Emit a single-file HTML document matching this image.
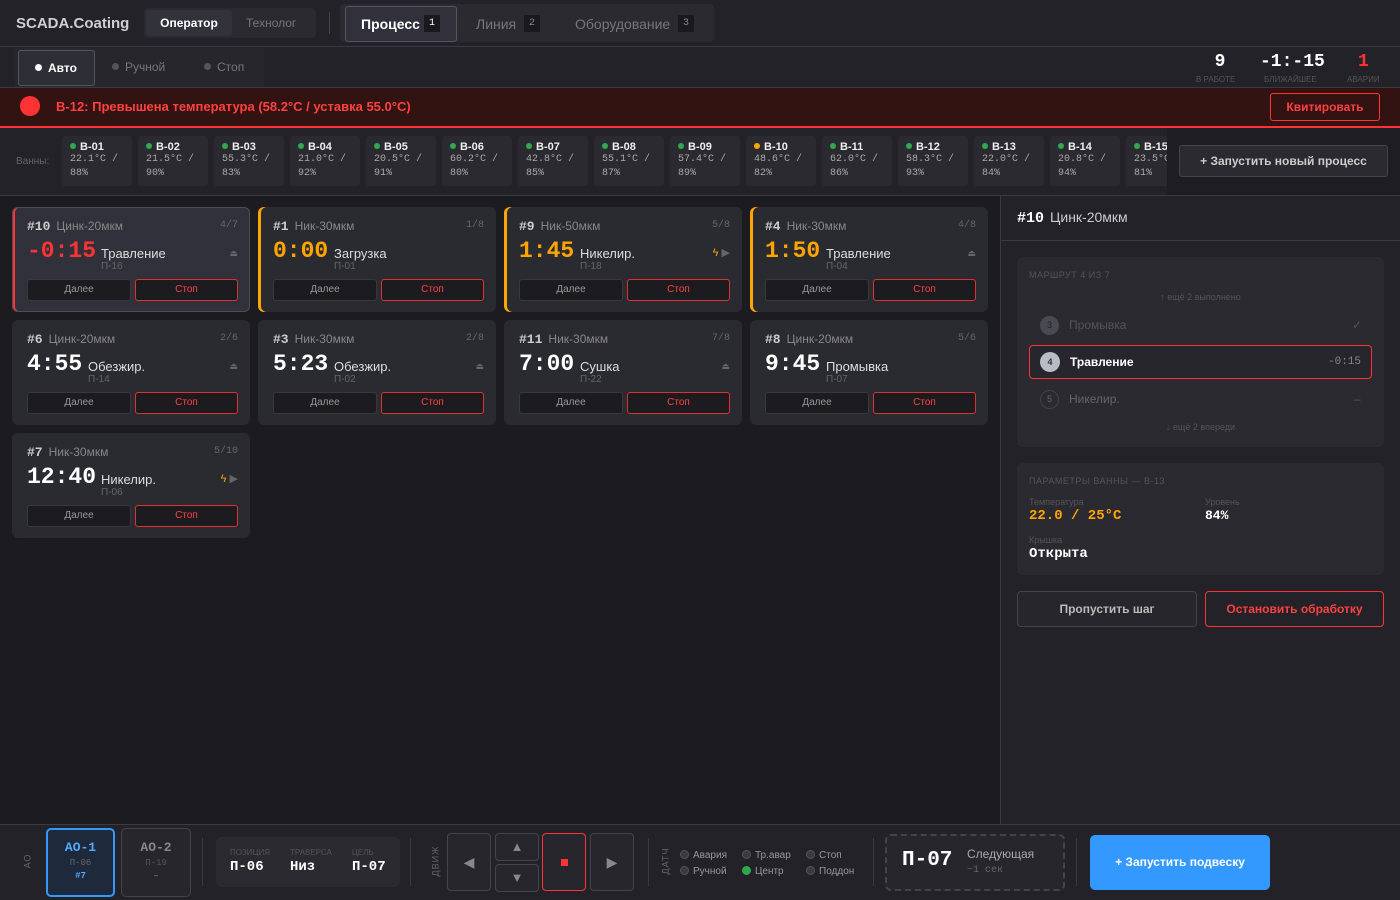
<!DOCTYPE html>
<html><head><meta charset="utf-8"><style>
*{box-sizing:border-box;margin:0;padding:0}
body{width:1400px;height:900px;background:#1c1c20;font-family:"Liberation Sans",sans-serif;color:#ddd;position:relative;overflow:hidden}
.a{position:absolute}
.m{font-family:"Liberation Mono",monospace}
.top{left:0;top:0;width:1400px;height:47px;background:#222228;border-bottom:1px solid #3a3a40}
.row2{left:0;top:47px;width:1400px;height:41px;background:#222228;border-bottom:1px solid #3a3a40}
.alarm{left:0;top:88px;width:1400px;height:40px;background:#331212;border-bottom:2px solid #ff3333}
.baths{left:0;top:128px;width:1400px;height:68px;background:#222228;border-bottom:1px solid #3a3a40}
.bath{top:136px;width:70px;height:50px;background:#2a2a30;border-radius:3px;padding:5px 0 0 8px}
.bath b{font-size:11px;color:#eee;display:block;line-height:12px}
.bath b i{display:inline-block;width:6px;height:6px;border-radius:3px;background:#2fa84f;margin-right:4px;vertical-align:1px}
.bath span{font-family:"Liberation Mono",monospace;font-size:10px;color:#aaa;line-height:14px;display:block;white-space:nowrap}
.card{width:238px;height:105px;background:#2a2a31;border-radius:6px}
.card .h{left:15px;top:12px;font-size:12px;color:#888;white-space:nowrap}
.card .h b{font-family:"Liberation Mono",monospace;color:#ccc;font-size:13px;margin-right:6px}
.card .c{right:12px;top:13px;font-size:10px;color:#666;font-family:"Liberation Mono",monospace}
.card .t{left:15px;top:31px;font-family:"Liberation Mono",monospace;font-weight:bold;font-size:23px;color:#fff}
.card .s{top:39px;font-size:13px;color:#ddd}
.card .p{top:54px;font-size:10px;color:#666}
.card .ic{right:12px;top:41px;font-size:9px;color:#666}
.card .d{left:15px;top:72px;width:104px;height:22px;background:#1c1c20;border:1px solid #38383f;border-radius:3px;font-size:10px;color:#999;text-align:center;line-height:20px}
.card .x{left:123px;top:72px;width:103px;height:22px;background:#1c1c20;border:1px solid #e03030;border-radius:3px;font-size:10px;color:#ff4040;text-align:center;line-height:20px}
.lr{box-shadow:inset 3px 0 0 #ff3333}.lo{box-shadow:inset 3px 0 0 #ffa500}
.vl{font-size:9px;color:#666;transform:rotate(-90deg);transform-origin:center;letter-spacing:1px}
.dot{display:inline-block;width:9px;height:9px;border-radius:5px;background:#3a3a42;border:1px solid #555;margin-right:4px;vertical-align:-1px}
.sn{font-size:10px;color:#999;white-space:nowrap}
.bb{border:1px solid #44444b;border-radius:4px;background:#26262c}
</style></head><body>
<div class="a top"></div>
<div class="a" style="left:16px;top:15px;font-size:15px;font-weight:bold;color:#cfcfd4">SCADA.Coating</div>
<div class="a" style="left:144px;top:8px;width:172px;height:30px;background:#2a2a30;border-radius:4px"></div>
<div class="a" style="left:146px;top:10px;width:86px;height:26px;background:#32323a;border-radius:3px;font-size:12px;font-weight:bold;color:#fff;text-align:center;line-height:26px">Оператор</div>
<div class="a" style="left:246px;top:16px;font-size:12px;color:#777">Технолог</div>
<div class="a" style="left:329px;top:12px;width:1px;height:22px;background:#444"></div>
<div class="a" style="left:340px;top:4px;width:374px;height:38px;background:#2a2a30;border-radius:4px"></div>
<div class="a" style="left:345px;top:6px;width:112px;height:36px;background:#30313a;border:1px solid #55555d;border-radius:3px"></div>
<div class="a" style="left:361px;top:16px;font-size:14px;font-weight:bold;color:#fff">Процесс</div>
<div class="a m" style="left:424px;top:15px;width:16px;height:17px;background:#1a1a1e;font-size:10px;color:#fff;text-align:center;line-height:17px">1</div>
<div class="a" style="left:476px;top:16px;font-size:14px;color:#777">Линия</div>
<div class="a m" style="left:524px;top:15px;width:16px;height:17px;background:#1a1a1e;font-size:10px;color:#888;text-align:center;line-height:17px">2</div>
<div class="a" style="left:575px;top:16px;font-size:14px;color:#777">Оборудование</div>
<div class="a m" style="left:678px;top:15px;width:16px;height:17px;background:#1a1a1e;font-size:10px;color:#888;text-align:center;line-height:17px">3</div>

<div class="a row2"></div>
<div class="a" style="left:14px;top:48px;width:250px;height:39px;background:#26262c"></div>
<div class="a" style="left:18px;top:50px;width:77px;height:36px;background:#2e2e36;border:1px solid #55555d;border-radius:3px;font-size:12px;font-weight:bold;color:#fff;line-height:34px;padding-left:16px"><span style="display:inline-block;width:7px;height:7px;border-radius:4px;background:#fff;margin-right:6px;vertical-align:1px"></span>Авто</div>
<div class="a" style="left:112px;top:60px;font-size:12px;color:#777"><span style="display:inline-block;width:7px;height:7px;border-radius:4px;background:#555;margin-right:6px;vertical-align:1px"></span>Ручной</div>
<div class="a" style="left:204px;top:60px;font-size:12px;color:#777"><span style="display:inline-block;width:7px;height:7px;border-radius:4px;background:#555;margin-right:6px;vertical-align:1px"></span>Стоп</div>
<div class="a m" style="left:1208px;top:52px;width:24px;text-align:center;font-size:18px;font-weight:bold;color:#fff">9</div>
<div class="a" style="left:1196px;top:75px;font-size:8px;color:#555">В РАБОТЕ</div>
<div class="a m" style="left:1260px;top:52px;font-size:18px;font-weight:bold;color:#fff">-1:-15</div>
<div class="a" style="left:1264px;top:75px;font-size:8px;color:#555">БЛИЖАЙШЕЕ</div>
<div class="a m" style="left:1358px;top:52px;font-size:18px;font-weight:bold;color:#ff3333">1</div>
<div class="a" style="left:1347px;top:75px;font-size:8px;color:#555">АВАРИИ</div>

<div class="a alarm"></div>
<div class="a" style="left:20px;top:96px;width:20px;height:20px;border-radius:10px;background:#ff3333"></div>
<div class="a" style="left:56px;top:99px;font-size:13px;font-weight:bold;color:#ff4040">В-12: Превышена температура (58.2°C / уставка 55.0°C)</div>
<div class="a" style="left:1270px;top:93px;width:110px;height:28px;border:1px solid #ff3333;border-radius:3px;font-size:12px;font-weight:bold;color:#ff4040;text-align:center;line-height:26px">Квитировать</div>

<div class="a baths"></div>
<div class="a" style="left:16px;top:156px;font-size:10px;color:#666">Ванны:</div>
<div class="a bath" style="left:62px"><b><i></i>В-01</b><span>22.1°C /</span><span>88%</span></div>
<div class="a bath" style="left:138px"><b><i></i>В-02</b><span>21.5°C /</span><span>90%</span></div>
<div class="a bath" style="left:214px"><b><i></i>В-03</b><span>55.3°C /</span><span>83%</span></div>
<div class="a bath" style="left:290px"><b><i></i>В-04</b><span>21.0°C /</span><span>92%</span></div>
<div class="a bath" style="left:366px"><b><i></i>В-05</b><span>20.5°C /</span><span>91%</span></div>
<div class="a bath" style="left:442px"><b><i></i>В-06</b><span>60.2°C /</span><span>80%</span></div>
<div class="a bath" style="left:518px"><b><i></i>В-07</b><span>42.8°C /</span><span>85%</span></div>
<div class="a bath" style="left:594px"><b><i></i>В-08</b><span>55.1°C /</span><span>87%</span></div>
<div class="a bath" style="left:670px"><b><i></i>В-09</b><span>57.4°C /</span><span>89%</span></div>
<div class="a bath" style="left:746px"><b><i style="background:#ffa500"></i>В-10</b><span>48.6°C /</span><span>82%</span></div>
<div class="a bath" style="left:822px"><b><i></i>В-11</b><span>62.0°C /</span><span>86%</span></div>
<div class="a bath" style="left:898px"><b><i></i>В-12</b><span>58.3°C /</span><span>93%</span></div>
<div class="a bath" style="left:974px"><b><i></i>В-13</b><span>22.0°C /</span><span>84%</span></div>
<div class="a bath" style="left:1050px"><b><i></i>В-14</b><span>20.8°C /</span><span>94%</span></div>
<div class="a bath" style="left:1126px;overflow:hidden"><b><i></i>В-15</b><span>23.5°C /</span><span>81%</span></div>
<div class="a" style="left:1167px;top:128px;width:233px;height:67px;background:#1e1e22"></div>
<div class="a" style="left:1179px;top:145px;width:209px;height:32px;background:#2a2a30;border:1px solid #44444b;border-radius:3px;font-size:12px;font-weight:bold;color:#ccc;text-align:center;line-height:30px">+ Запустить новый процесс</div>

<!-- cards row1 -->
<div class="a card" style="left:12px;top:207px;background:#30313a;box-shadow:inset 0 0 0 1px #4a4d5a,inset 3px 0 0 #ff3333">
<div class="a h"><b>#10</b>Цинк-20мкм</div><div class="a c">4/7</div>
<div class="a t" style="color:#ff3333">-0:15</div><div class="a s" style="left:89px">Травление</div><div class="a p" style="left:89px">П-16</div><div class="a ic">⏏</div>
<div class="a d">Далее</div><div class="a x">Стоп</div></div>
<div class="a card lo" style="left:258px;top:207px">
<div class="a h"><b>#1</b>Ник-30мкм</div><div class="a c">1/8</div>
<div class="a t" style="color:#ffa500">0:00</div><div class="a s" style="left:76px">Загрузка</div><div class="a p" style="left:76px">П-01</div>
<div class="a d">Далее</div><div class="a x">Стоп</div></div>
<div class="a card lo" style="left:504px;top:207px">
<div class="a h"><b>#9</b>Ник-50мкм</div><div class="a c">5/8</div>
<div class="a t" style="color:#ffa500">1:45</div><div class="a s" style="left:76px">Никелир.</div><div class="a p" style="left:76px">П-18</div><div class="a ic" style="font-size:11px;top:39px"><span style="color:#ffa500">ϟ</span> ▶</div>
<div class="a d">Далее</div><div class="a x">Стоп</div></div>
<div class="a card lo" style="left:750px;top:207px">
<div class="a h"><b>#4</b>Ник-30мкм</div><div class="a c">4/8</div>
<div class="a t" style="color:#ffa500">1:50</div><div class="a s" style="left:76px">Травление</div><div class="a p" style="left:76px">П-04</div><div class="a ic">⏏</div>
<div class="a d">Далее</div><div class="a x">Стоп</div></div>
<!-- row2 -->
<div class="a card" style="left:12px;top:320px">
<div class="a h"><b>#6</b>Цинк-20мкм</div><div class="a c">2/6</div>
<div class="a t">4:55</div><div class="a s" style="left:76px">Обезжир.</div><div class="a p" style="left:76px">П-14</div><div class="a ic">⏏</div>
<div class="a d">Далее</div><div class="a x">Стоп</div></div>
<div class="a card" style="left:258px;top:320px">
<div class="a h"><b>#3</b>Ник-30мкм</div><div class="a c">2/8</div>
<div class="a t">5:23</div><div class="a s" style="left:76px">Обезжир.</div><div class="a p" style="left:76px">П-02</div><div class="a ic">⏏</div>
<div class="a d">Далее</div><div class="a x">Стоп</div></div>
<div class="a card" style="left:504px;top:320px">
<div class="a h"><b>#11</b>Ник-30мкм</div><div class="a c">7/8</div>
<div class="a t">7:00</div><div class="a s" style="left:76px">Сушка</div><div class="a p" style="left:76px">П-22</div><div class="a ic">⏏</div>
<div class="a d">Далее</div><div class="a x">Стоп</div></div>
<div class="a card" style="left:750px;top:320px">
<div class="a h"><b>#8</b>Цинк-20мкм</div><div class="a c">5/6</div>
<div class="a t">9:45</div><div class="a s" style="left:76px">Промывка</div><div class="a p" style="left:76px">П-07</div>
<div class="a d">Далее</div><div class="a x">Стоп</div></div>
<!-- row3 -->
<div class="a card" style="left:12px;top:433px">
<div class="a h"><b>#7</b>Ник-30мкм</div><div class="a c">5/10</div>
<div class="a t">12:40</div><div class="a s" style="left:89px">Никелир.</div><div class="a p" style="left:89px">П-06</div><div class="a ic" style="font-size:11px;top:39px"><span style="color:#ffa500">ϟ</span> ▶</div>
<div class="a d">Далее</div><div class="a x">Стоп</div></div>

<!-- right panel -->
<div class="a" style="left:1000px;top:196px;width:400px;height:628px;background:#222228;border-left:1px solid #3a3a40"></div>
<div class="a" style="left:1000px;top:240px;width:400px;height:1px;background:#3a3a40"></div>
<div class="a" style="left:1017px;top:209px;font-size:14px;color:#ccc;white-space:nowrap"><b class="m" style="color:#fff;font-size:15px;margin-right:6px">#10</b>Цинк-20мкм</div>
<div class="a" style="left:1017px;top:257px;width:367px;height:190px;background:#2a2a30;border-radius:6px"></div>
<div class="a" style="left:1029px;top:270px;font-size:9px;color:#555;letter-spacing:.5px">МАРШРУТ 4 ИЗ 7</div>
<div class="a" style="left:1017px;top:292px;width:367px;text-align:center;font-size:9px;color:#555">↑ ещё 2 выполнено</div>
<div class="a" style="left:1040px;top:316px;width:19px;height:19px;border-radius:10px;background:#4a4a52;font-size:9px;color:#222;text-align:center;line-height:19px">3</div>
<div class="a" style="left:1069px;top:318px;font-size:12px;color:#555">Промывка</div>
<div class="a" style="left:1352px;top:318px;font-size:12px;color:#555">✓</div>
<div class="a" style="left:1029px;top:345px;width:343px;height:34px;border:1px solid #ff3333;border-radius:4px;background:#26262c"></div>
<div class="a" style="left:1040px;top:352px;width:20px;height:20px;border-radius:10px;background:#b8bcc4;font-size:9px;color:#333;text-align:center;line-height:20px;font-weight:bold">4</div>
<div class="a" style="left:1070px;top:355px;font-size:12px;font-weight:bold;color:#fff">Травление</div>
<div class="a m" style="left:1328px;top:356px;font-size:11px;color:#888">-0:15</div>
<div class="a" style="left:1040px;top:390px;width:19px;height:19px;border-radius:10px;border:1px solid #444;font-size:9px;color:#666;text-align:center;line-height:17px">5</div>
<div class="a" style="left:1069px;top:392px;font-size:12px;color:#666">Никелир.</div>
<div class="a" style="left:1354px;top:392px;font-size:12px;color:#555">–</div>
<div class="a" style="left:1017px;top:422px;width:367px;text-align:center;font-size:9px;color:#555">↓ ещё 2 впереди</div>
<div class="a" style="left:1017px;top:463px;width:367px;height:112px;background:#2a2a30;border-radius:6px"></div>
<div class="a" style="left:1029px;top:476px;font-size:9px;color:#555;letter-spacing:.5px">ПАРАМЕТРЫ ВАННЫ — В-13</div>
<div class="a" style="left:1029px;top:497px;font-size:9px;color:#555">Температура</div>
<div class="a m" style="left:1029px;top:508px;font-size:14px;font-weight:bold;color:#ffa500">22.0 / 25°C</div>
<div class="a" style="left:1205px;top:497px;font-size:9px;color:#555">Уровень</div>
<div class="a m" style="left:1205px;top:508px;font-size:13px;font-weight:bold;color:#fff">84%</div>
<div class="a" style="left:1029px;top:535px;font-size:9px;color:#555">Крышка</div>
<div class="a m" style="left:1029px;top:546px;font-size:14px;font-weight:bold;color:#fff">Открыта</div>
<div class="a" style="left:1017px;top:591px;width:180px;height:36px;border:1px solid #44444b;border-radius:4px;background:#26262c;font-size:12px;font-weight:bold;color:#bbb;text-align:center;line-height:34px">Пропустить шаг</div>
<div class="a" style="left:1205px;top:591px;width:179px;height:36px;border:1px solid #ff3333;border-radius:4px;font-size:12px;font-weight:bold;color:#ff4040;text-align:center;line-height:34px">Остановить обработку</div>

<!-- bottom -->
<div class="a" style="left:0;top:824px;width:1400px;height:76px;background:#222228;border-top:1px solid #3a3a40"></div>
<div class="a vl" style="left:20px;top:856px">АО</div>
<div class="a" style="left:46px;top:828px;width:69px;height:69px;border:2px solid #3399ff;border-radius:5px;background:#1e2a3c;text-align:center">
<div class="m" style="font-size:13px;font-weight:bold;color:#55aaff;margin-top:10px">АО-1</div>
<div class="m" style="font-size:9px;color:#666;margin-top:3px">П-06</div>
<div class="m" style="font-size:9px;color:#55aaff;margin-top:3px;font-weight:bold">#7</div></div>
<div class="a" style="left:121px;top:828px;width:70px;height:69px;border:1px solid #44444b;border-radius:5px;background:#26262c;text-align:center">
<div class="m" style="font-size:13px;font-weight:bold;color:#888;margin-top:11px">АО-2</div>
<div class="m" style="font-size:9px;color:#555;margin-top:3px">П-19</div>
<div class="m" style="font-size:9px;color:#888;margin-top:3px">–</div></div>
<div class="a" style="left:202px;top:838px;width:1px;height:48px;background:#3a3a40"></div>
<div class="a" style="left:216px;top:837px;width:184px;height:50px;background:#2a2a30;border-radius:6px"></div>
<div class="a" style="left:230px;top:848px;font-size:8px;color:#555">ПОЗИЦИЯ</div>
<div class="a" style="left:290px;top:848px;font-size:8px;color:#555">ТРАВЕРСА</div>
<div class="a" style="left:352px;top:848px;font-size:8px;color:#555">ЦЕЛЬ</div>
<div class="a m" style="left:230px;top:859px;font-size:14px;font-weight:bold;color:#fff">П-06</div>
<div class="a m" style="left:290px;top:859px;font-size:14px;font-weight:bold;color:#fff">Низ</div>
<div class="a m" style="left:352px;top:859px;font-size:14px;font-weight:bold;color:#fff">П-07</div>
<div class="a" style="left:410px;top:838px;width:1px;height:48px;background:#3a3a40"></div>
<div class="a vl" style="left:420px;top:856px">ДВИЖ</div>
<div class="a bb" style="left:447px;top:833px;width:44px;height:58px;color:#888;font-size:14px;text-align:center;line-height:56px">◀</div>
<div class="a bb" style="left:495px;top:833px;width:44px;height:28px;color:#888;font-size:13px;text-align:center;line-height:26px">▲</div>
<div class="a bb" style="left:495px;top:864px;width:44px;height:28px;color:#888;font-size:13px;text-align:center;line-height:26px">▼</div>
<div class="a bb" style="left:542px;top:833px;width:44px;height:58px;border-color:#ff3333"><div class="a" style="left:18px;top:25px;width:7px;height:7px;background:#ff3333"></div></div>
<div class="a bb" style="left:590px;top:833px;width:44px;height:58px;color:#888;font-size:14px;text-align:center;line-height:56px">▶</div>
<div class="a" style="left:648px;top:838px;width:1px;height:48px;background:#3a3a40"></div>
<div class="a vl" style="left:652px;top:856px">ДАТЧ</div>
<div class="a sn" style="left:680px;top:850px"><i class="dot"></i>Авария</div>
<div class="a sn" style="left:742px;top:850px"><i class="dot"></i>Тр.авар</div>
<div class="a sn" style="left:806px;top:850px"><i class="dot"></i>Стоп</div>
<div class="a sn" style="left:680px;top:866px"><i class="dot"></i>Ручной</div>
<div class="a sn" style="left:742px;top:866px"><i class="dot" style="background:#2fa84f;border-color:#2fa84f"></i>Центр</div>
<div class="a sn" style="left:806px;top:866px"><i class="dot"></i>Поддон</div>
<div class="a" style="left:873px;top:838px;width:1px;height:48px;background:#3a3a40"></div>
<div class="a" style="left:885px;top:834px;width:180px;height:57px;border:2px dashed #44444b;border-radius:6px;background:#26262c"></div>
<div class="a m" style="left:902px;top:849px;font-size:21px;font-weight:bold;color:#fff">П-07</div>
<div class="a" style="left:967px;top:847px;font-size:12px;color:#aaa">Следующая</div>
<div class="a m" style="left:967px;top:865px;font-size:10px;color:#666">~1 сек</div>
<div class="a" style="left:1076px;top:838px;width:1px;height:48px;background:#3a3a40"></div>
<div class="a" style="left:1090px;top:835px;width:180px;height:55px;background:#3399ff;border-radius:5px;font-size:12px;font-weight:bold;color:#fff;text-align:center;line-height:55px">+ Запустить подвеску</div>
</body></html>
